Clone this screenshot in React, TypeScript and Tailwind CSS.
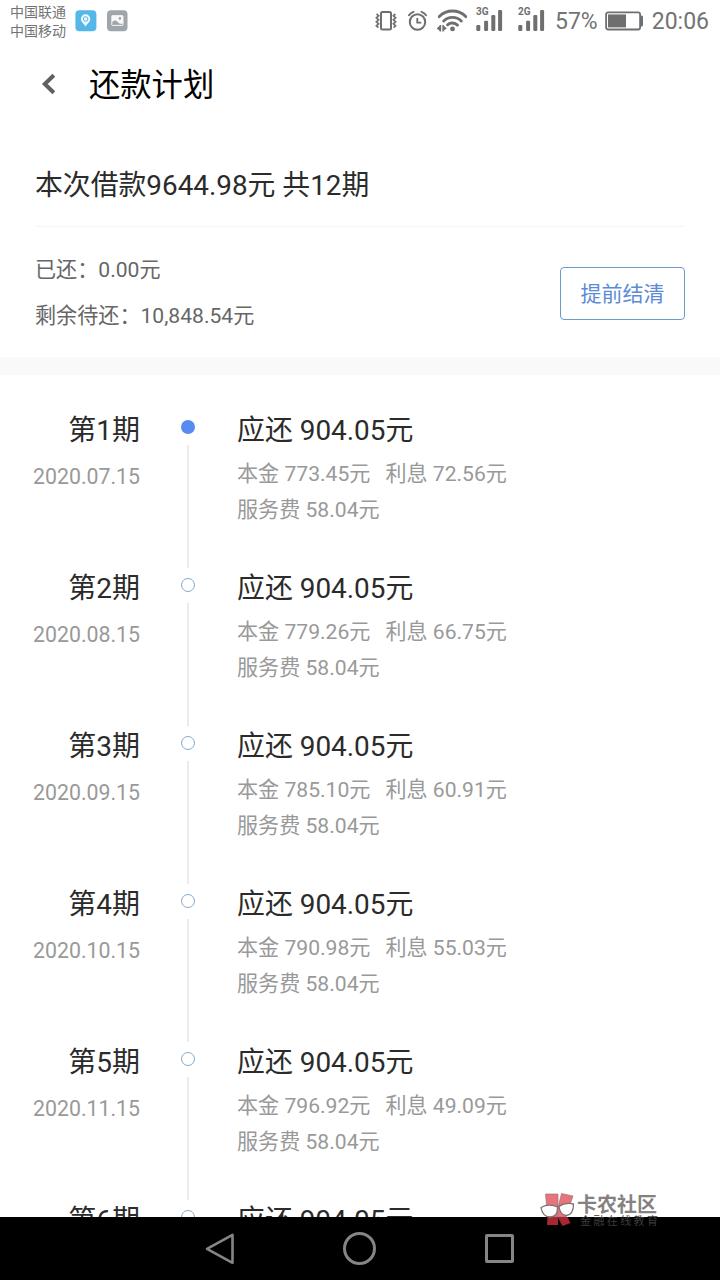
interface Installment {
  no: number;
  date: string;
  total: string;
  principal: string;
  interest: string;
  fee: string;
}

const installments: Installment[] = [
  { no: 1, date: '2020.07.15', total: '904.05', principal: '773.45', interest: '72.56', fee: '58.04' },
  { no: 2, date: '2020.08.15', total: '904.05', principal: '779.26', interest: '66.75', fee: '58.04' },
  { no: 3, date: '2020.09.15', total: '904.05', principal: '785.10', interest: '60.91', fee: '58.04' },
  { no: 4, date: '2020.10.15', total: '904.05', principal: '790.98', interest: '55.03', fee: '58.04' },
  { no: 5, date: '2020.11.15', total: '904.05', principal: '796.92', interest: '49.09', fee: '58.04' },
];

function SignalIcon({ label }: { label: string }) {
  return (
    <svg width="28" height="26" viewBox="0 0 28 26" className="shrink-0">
      <text x="0" y="9" fontSize="10" fontWeight="700" fontFamily="Roboto, sans-serif" fill="#6f6f6f">
        {label}
      </text>
      <g fill="#6f6f6f">
        <rect x="0.3" y="19" width="4" height="6" rx="1.2" />
        <rect x="8.1" y="14.7" width="4" height="10.3" rx="1.2" />
        <rect x="15.3" y="9" width="4" height="16" rx="1.2" />
        <rect x="22.1" y="4" width="4" height="21" rx="1.2" />
      </g>
    </svg>
  );
}

function StatusBar() {
  return (
    <div className="flex h-[42px] items-center pr-[11px] pl-[10px] text-[#737373]">
      <div className="w-[65px] text-[14px] leading-[18px] whitespace-nowrap">
        <div>中国联通</div>
        <div className="pt-px">中国移动</div>
      </div>
      <svg width="22" height="22" viewBox="0 0 22 22" className="shrink-0">
        <rect x="0.4" y="0.3" width="21" height="21" rx="4" fill="#55b7e8" />
        <path d="M10.6 4.3a4.7 4.7 0 0 0-4.7 4.7c0 3 3 4.4 4.7 7.5 1.7-3.1 4.7-4.5 4.7-7.5a4.7 4.7 0 0 0-4.7-4.7z" fill="#f3fbff" />
        <circle cx="10.6" cy="9" r="2.3" fill="#e4f6fd" stroke="#55b7e8" strokeWidth="1" />
      </svg>
      <svg width="22" height="22" viewBox="0 0 22 22" className="ml-[10px] shrink-0">
        <rect x="0" y="0.3" width="20.5" height="21" rx="4" fill="#9ea5ab" />
        <rect x="4.8" y="5.6" width="11.2" height="9.8" rx="0.6" fill="none" stroke="#f8f8f8" strokeWidth="1" />
        <path d="M5 12.2c2.2-2.2 4-2 6 0 1.6 1.6 3 2 5 1.2V6H5z" fill="#f8f8f8" />
        <circle cx="12.9" cy="8.4" r="1.3" fill="#9ea5ab" />
      </svg>

      <div className="ml-auto flex items-center">
        <svg width="22" height="22" viewBox="0 0 22 22" fill="none" stroke="#6f6f6f" className="shrink-0">
          <rect x="6" y="2" width="10" height="17.5" rx="1.5" strokeWidth="2" />
          <path d="M1.6 4l2 1.8-2.2 2 2.2 2-2.2 2 2.2 2-2.2 2 2 1.8M20.4 4l-2 1.8 2.2 2-2.2 2 2.2 2-2.2 2 2.2 2-2 1.8" strokeWidth="1.7" />
        </svg>
        <svg width="20" height="22" viewBox="0 0 20 22" fill="none" stroke="#6f6f6f" className="ml-[11px] shrink-0">
          <circle cx="9.5" cy="12" r="7.7" strokeWidth="2" />
          <path d="M9.3 8v4.6h4" strokeWidth="1.9" />
          <path d="M1 5.3a8 8 0 0 1 4.5-3.5M18 5.3a8 8 0 0 0-4.5-3.5" strokeWidth="1.9" strokeLinecap="round" />
        </svg>
        <svg width="32" height="24" viewBox="0 0 32 24" fill="none" stroke="#6f6f6f" className="ml-[9px] shrink-0">
          <path d="M2.3 7.6a18.5 18.5 0 0 1 26.4 0" strokeWidth="2.9" strokeLinecap="round" />
          <path d="M6.7 12a12.5 12.5 0 0 1 17.6 0" strokeWidth="2.9" strokeLinecap="round" />
          <path d="M10.5 15.8a7.5 7.5 0 0 1 10 .3" strokeWidth="2.9" strokeLinecap="round" />
          <circle cx="15.5" cy="19.9" r="2.4" fill="#6f6f6f" stroke="none" />
          <path d="M-0.4 19.3l3.4-2.8v5.6zM9.8 19.3l-3.4-2.8v5.6z" fill="#6f6f6f" stroke="none" />
          <path d="M3.4 16v6.6M6.1 16v6.6" strokeWidth="1.5" />
        </svg>
        <div className="mb-[4px] ml-[7px] flex gap-[14px]">
          <SignalIcon label="3G" />
          <SignalIcon label="2G" />
        </div>
        <span className="ml-[9px] pt-[2px] text-[23px] leading-[42px]">57%</span>
        <svg width="39" height="20" viewBox="0 0 39 20" className="ml-[7px] shrink-0">
          <rect x="1.1" y="1.3" width="34" height="17.2" rx="2" fill="none" stroke="#6f6f6f" strokeWidth="1.8" />
          <rect x="3" y="3.4" width="18" height="13" fill="#6f6f6f" />
          <path d="M35.5 4.5h1q1.5 0 1.5 1.5v8q0 1.5-1.5 1.5h-1z" fill="#6f6f6f" />
        </svg>
        <span className="ml-[8px] pt-[2px] text-[23px] leading-[42px]">20:06</span>
      </div>
    </div>
  );
}

function TimelineDot({ filled = false }: { filled?: boolean }) {
  return (
    <div
      className={
        filled
          ? 'h-[14px] w-[14px] shrink-0 rounded-full bg-[#578bf1]'
          : 'h-[14px] w-[14px] shrink-0 rounded-full border border-[#87aac9]'
      }
    />
  );
}

function InstallmentRow({ item }: { item: Installment }) {
  return (
    <div className="flex h-[158px] shrink-0">
      <div className="w-[140px] pt-px text-right whitespace-nowrap">
        <div className="text-[28px] leading-[42px] text-[#2b2b2b]">第{item.no}期</div>
        <div className="mt-[9px] text-[21.3px] leading-[32px] text-[#999]">{item.date}</div>
      </div>
      <div className="ml-[40px] flex w-[15px] flex-col items-center pt-[11px]">
        <TimelineDot filled={item.no === 1} />
        <div className="mt-[11px] h-[123px] w-[2px] shrink-0 bg-[#ebebeb]" />
      </div>
      <div className="ml-[42px] pt-px whitespace-nowrap">
        <div className="text-[27.9px] leading-[42px] text-[#2b2b2b]">应还 {item.total}元</div>
        <div className="mt-[4px] text-[21.1px] leading-[35.5px] text-[#999]">
          <div className="flex gap-[15px]">
            <span>本金 {item.principal}元</span>
            <span>利息 {item.interest}元</span>
          </div>
          <div>服务费 {item.fee}元</div>
        </div>
      </div>
    </div>
  );
}

function Watermark() {
  return (
    <div className="absolute top-[1190px] left-[539px] flex">
      <svg width="38" height="38" viewBox="0 0 38 38" className="shrink-0">
        <path d="M6.5 4h12.5v23H8.5z" fill="#e8737a" stroke="#a0787a" strokeWidth="0.7" />
        <path d="M22.5 3.500l11.500 2.500-7 21h-7.500l-1-8z" fill="#e8737a" stroke="#a0787a" strokeWidth="0.7" />
        <path d="M8.5 27h10.500v8H8z" fill="#a52830" />
        <path d="M18.5 27h10l3 6-8 3z" fill="#a52830" />
        <path d="M2 17.500q8-4.500 16.500-.5.500 9.500-7 10Q3.500 27 2 17.500zM20 16.500q6-4.500 14.500-2.500 0 10.500-7 11.500Q21 25 20 16.500z" fill="#fff" stroke="#7b7476" strokeWidth="1.3" />
        <path d="M18.3 17q1-1.200 1.800-.5" fill="none" stroke="#7b7476" strokeWidth="1.3" />
      </svg>
      <div className="pt-[2px] whitespace-nowrap">
        <div className="text-[20px] leading-[26px] font-bold text-[#858181]">卡农社区</div>
        <div className="-mt-[2px] ml-[3px] text-[11px] leading-[12px] tracking-[2.4px] text-[#3d3d3d]">金融在线教育</div>
      </div>
    </div>
  );
}

export default function App() {
  return (
    <div className="relative flex h-[1280px] w-[720px] flex-col overflow-hidden bg-white font-['Roboto','Noto_Sans_CJK_SC',sans-serif]">
      <StatusBar />

      <header className="flex h-[86px] shrink-0 items-center pl-[41px]">
        <svg width="15" height="22" viewBox="0 0 15 22" fill="none" className="mb-[3px]">
          <path d="M12.8 2.2L3.8 11l9 8.8" stroke="#606060" strokeWidth="4" />
        </svg>
        <h1 className="ml-[33px] pt-[2px] text-[31.3px] leading-[42px] text-black">还款计划</h1>
      </header>

      <section className="h-[229px] shrink-0 px-[35px] pt-[37px]">
        <h2 className="h-[62px] border-b border-[#f6f6f6] text-[27.85px] leading-[42px] text-[#2b2b2b]">
          本次借款9644.98元 共12期
        </h2>
        <div className="flex justify-between">
          <div className="pt-[20px] text-[21.1px] leading-[46px] text-[#666]">
            <div>已还：0.00元</div>
            <div>剩余待还：10,848.54元</div>
          </div>
          <button className="mt-[40px] h-[53px] w-[125px] rounded-[4px] border border-[#6b9bc9] pt-[3px] text-[21px] text-[#5b8bd5]">
            提前结清
          </button>
        </div>
      </section>

      <div className="h-[18px] shrink-0 bg-[#f9f9f9]" />

      <main className="flex min-h-0 flex-1 flex-col overflow-hidden pt-[34px]">
        {installments.map((item) => (
          <InstallmentRow key={item.no} item={item} />
        ))}
        {/* the sixth row runs under the navigation bar */}
        <div className="flex shrink-0 text-[28px] leading-[42px] whitespace-nowrap text-[#2b2b2b]">
          <div className="w-[140px] pt-px text-right">第6期</div>
          <div className="ml-[40px] flex w-[15px] justify-center pt-[11px]">
            <TimelineDot />
          </div>
          <div className="ml-[42px] pt-px text-[27.9px]">应还 904.05元</div>
        </div>
      </main>

      <nav className="flex h-[63px] shrink-0 items-center bg-black pl-[204px]">
        <svg width="32" height="34" viewBox="0 0 32 34" fill="none" stroke="#858585" strokeWidth="2.6">
          <path d="M28.5 2.8v28L3 16.8z" strokeLinejoin="round" />
        </svg>
        <div className="ml-[107px] h-[33px] w-[33px] rounded-full border-3 border-[#858585]" />
        <div className="ml-[109px] h-[29px] w-[29px] rounded-[2px] border-3 border-[#858585]" />
      </nav>

      <Watermark />
    </div>
  );
}
